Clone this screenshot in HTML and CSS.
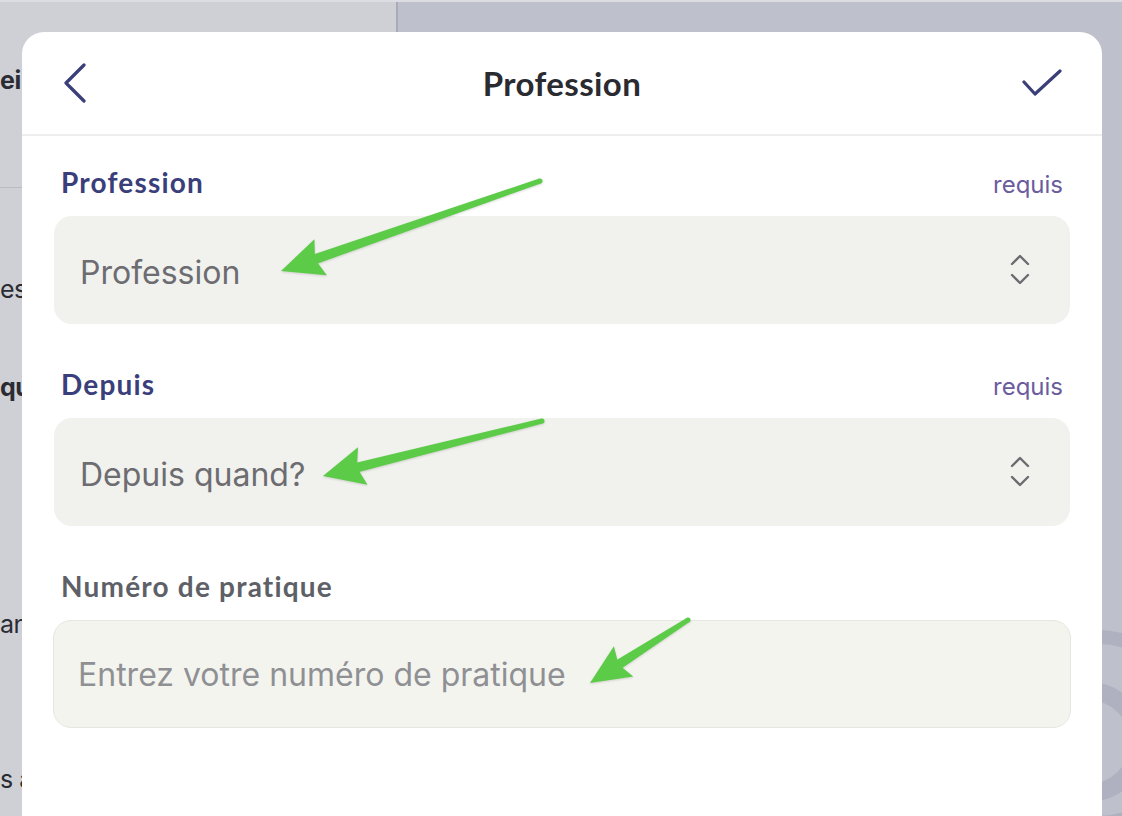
FILE: index.html
```html
<!DOCTYPE html>
<html lang="fr">
<head>
<meta charset="utf-8">
<title>Profession</title>
<link rel="stylesheet" href="styles.css">
</head>
<body>
<div class="backdrop">
  <div class="bg-left">
    <div class="bg-text bold t1">ei</div>
    <div class="bg-rule"></div>
    <div class="bg-text t2">es</div>
    <div class="bg-text bold t3">qu</div>
    <div class="bg-text t4">an</div>
    <div class="bg-text t5">s a</div>
  </div>
  <div class="bg-divider"></div>
  <div class="bg-right">
    <div class="ring ring-a"></div>
    <div class="ring ring-b"></div>
  </div>
</div>

<div class="modal">
  <header class="modal-header">
    <button class="icon-btn" aria-label="Retour">
      <svg width="26" height="40" viewBox="0 0 26 40"><path d="M22 2 L4 20 L22 38" fill="none" stroke="#3a3f78" stroke-width="3.2" stroke-linecap="round" stroke-linejoin="round"/></svg>
    </button>
    <h1 class="modal-title">Profession</h1>
    <button class="icon-btn" aria-label="Valider">
      <svg width="40" height="28" viewBox="0 0 40 28"><path d="M2 13 L13 25 L38 2" fill="none" stroke="#3a3f78" stroke-width="3.2" stroke-linecap="round" stroke-linejoin="round"/></svg>
    </button>
  </header>

  <div class="modal-body">
    <div class="field">
      <div class="field-label-row">
        <span class="field-label">Profession</span>
        <span class="field-req">requis</span>
      </div>
      <div class="select-box">
        <span class="select-value">Profession</span>
        <svg class="updown" width="20" height="32" viewBox="0 0 20 32"><path d="M2 10 L10 2 L18 10 M2 21 L10 29 L18 21" fill="none" stroke="#6b6b70" stroke-width="2.4" stroke-linecap="round" stroke-linejoin="round"/></svg>
      </div>
    </div>

    <div class="field">
      <div class="field-label-row">
        <span class="field-label">Depuis</span>
        <span class="field-req">requis</span>
      </div>
      <div class="select-box">
        <span class="select-value">Depuis quand?</span>
        <svg class="updown" width="20" height="32" viewBox="0 0 20 32"><path d="M2 10 L10 2 L18 10 M2 21 L10 29 L18 21" fill="none" stroke="#6b6b70" stroke-width="2.4" stroke-linecap="round" stroke-linejoin="round"/></svg>
      </div>
    </div>

    <div class="field">
      <div class="field-label-row">
        <span class="field-label muted">Numéro de pratique</span>
      </div>
      <div class="input-box">
        <span class="placeholder">Entrez votre numéro de pratique</span>
      </div>
    </div>
  </div>
</div>

<svg class="annotations" width="1122" height="816" viewBox="0 0 1122 816">
  <g fill="#5ccb48">
    <polygon points="539.2,178.6 540.8,183.4 312.8,265.2 309.6,255.8"/>
    <circle cx="540" cy="181" r="2.5"/>
    <polygon points="281,271 314.4,239.3 315,259.2 326.9,275.2"/>

    <polygon points="541.4,418.6 542.6,423.4 353.3,473.6 350.9,463.9"/>
    <circle cx="542" cy="421" r="2.5"/>
    <polygon points="323,476 358.0,447.2 357.0,467.5 367.5,484.8"/>

    <polygon points="686.65,617.9 689.35,622.1 617.9,671.0 612.5,662.6"/>
    <circle cx="688" cy="620" r="2.5"/>
    <polygon points="590,683 613.9,646.3 618.6,664.6 633.3,676.5"/>
  </g>
</svg>
</body>
</html>
```
FILE: styles.css
```css
* { box-sizing: border-box; }

html, body {
  margin: 0;
  padding: 0;
  width: 1122px;
  height: 816px;
  overflow: hidden;
}

body {
  position: relative;
  font-family: "Inter", "Liberation Sans", sans-serif;
  background: #bec0cc;
}

/* ---------- background page ---------- */
.backdrop {
  display: flex;
  height: 816px;
  border-top: 2px solid #dcdde2;
}

.bg-left {
  width: 396px;
  background: #cfd0d6;
  display: flex;
  flex-direction: column;
  color: #2b2c33;
}

.bg-divider {
  width: 2px;
  background: #a9abb6;
}

.bg-right {
  flex: 1;
  background: #bec0cc;
  position: relative;
  overflow: hidden;
}

.bg-text {
  font-family: "Inter", "Liberation Sans", sans-serif;
  font-size: 25px;
  line-height: 30px;
  height: 30px;
  letter-spacing: -0.5px;
}
.bg-text.bold { font-weight: 700; }
.t1 { margin-top: 63px; }
.t2 { margin-top: 86px; }
.t3 { margin-top: 68px; }
.t4 { margin-top: 207px; }
.t5 { margin-top: 125px; }

.bg-rule {
  margin-top: 92px;
  height: 1px;
  background: #b9bbc4;
}

.ring {
  position: absolute;
  border-radius: 50%;
  border: 14px solid #afb1c0;
}
.ring-a { width: 200px; height: 200px; left: 600px; top: 628px; }
.ring-b { width: 120px; height: 120px; left: 630px; top: 680px; border-width: 18px; }

/* ---------- modal ---------- */
.modal {
  position: absolute;
  left: 22px;
  top: 32px;
  width: 1080px;
  height: 820px;
  background: #ffffff;
  border-radius: 22px 22px 0 0;
  display: flex;
  flex-direction: column;
}

.modal-header {
  height: 104px;
  border-bottom: 2px solid #eeeeee;
  display: flex;
  align-items: center;
  justify-content: space-between;
  padding: 0 40px 0 40px;
  flex-shrink: 0;
}

.icon-btn {
  background: none;
  border: none;
  padding: 0;
  display: flex;
  align-items: center;
  justify-content: center;
  width: 40px;
  height: 44px;
}
.icon-btn:first-child { justify-content: flex-start; }

.modal-title {
  margin: 0;
  font-family: "Lato", "Liberation Sans", sans-serif;
  font-weight: 700;
  font-size: 33px;
  color: #2a2b31;
  letter-spacing: 0.4px;
}

.modal-body {
  padding: 30px 32px 0 32px;
  display: flex;
  flex-direction: column;
  gap: 44px;
}

.field {
  display: flex;
  flex-direction: column;
  gap: 18px;
}

.field-label-row {
  display: flex;
  justify-content: space-between;
  align-items: baseline;
  padding: 0 7px;
  height: 32px;
  line-height: 32px;
}

.field-label {
  font-family: "Lato", "Liberation Sans", sans-serif;
  font-weight: 700;
  font-size: 28px;
  letter-spacing: 1.2px;
  color: #3a3e7a;
}
.field-label.muted { color: #5e6068; }

.field-req {
  font-family: "Inter", "Liberation Sans", sans-serif;
  font-size: 24px;
  color: #6b5c9e;
}

.select-box {
  height: 108px;
  border-radius: 18px;
  background: #f1f1ed;
  display: flex;
  align-items: center;
  justify-content: space-between;
  padding: 0 40px 0 26px;
}

.select-value {
  font-family: "Inter", "Liberation Sans", sans-serif;
  font-size: 32px;
  color: #6c6c71;
  padding-top: 5px;
}

.updown { display: block; }

.input-box {
  height: 108px;
  margin: 0 -1px;
  border-radius: 18px;
  background: #f4f4ef;
  border: 1px solid #e7e7e1;
  display: flex;
  align-items: center;
  padding: 0 24px;
}

.placeholder {
  font-family: "Inter", "Liberation Sans", sans-serif;
  font-size: 32px;
  color: #8f9094;
}

/* ---------- annotation arrows ---------- */
.annotations {
  position: absolute;
  left: 0;
  top: 0;
  pointer-events: none;
  filter: drop-shadow(0 1px 1px rgba(0,0,0,0.15));
}
```
